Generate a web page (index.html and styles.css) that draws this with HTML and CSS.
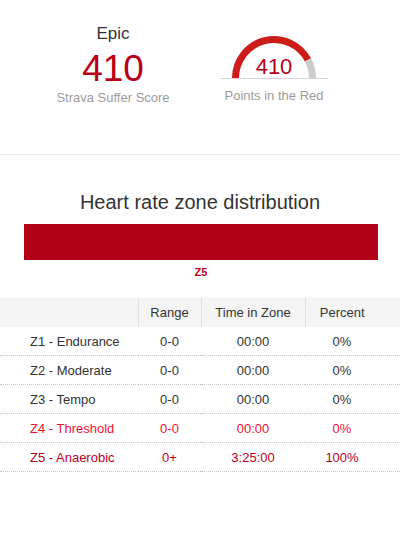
FILE: index.html
```html
<!DOCTYPE html>
<html>
<head>
<meta charset="utf-8">
<link rel="stylesheet" href="styles.css">
</head>
<body>
<section class="summary">
  <div class="score">
    <div class="score-label">Epic</div>
    <div class="score-value">410</div>
    <div class="caption">Strava Suffer Score</div>
  </div>
  <div class="gauge">
    <svg class="gauge-svg" width="108" height="46" viewBox="0 0 108 46">
      <path d="M 15.5 44 A 38.5 38.5 0 0 1 88.0 25.93" fill="none" stroke="#cc1d1a" stroke-width="7"/>
      <path d="M 88.0 25.93 A 38.5 38.5 0 0 1 92.5 44" fill="none" stroke="#cccccc" stroke-width="7"/>
      <line x1="0" y1="44.5" x2="108" y2="44.5" stroke="#d6d6d6" stroke-width="1"/>
      <text x="54" y="40" text-anchor="middle" class="gauge-text">410</text>
    </svg>
    <div class="caption">Points in the Red</div>
  </div>
</section>
<section class="zones">
  <h2 class="zones-title">Heart rate zone distribution</h2>
  <div class="bar"></div>
  <div class="bar-label">Z5</div>
  <table class="zone-table">
    <colgroup>
      <col class="c-name"><col class="c-range"><col class="c-time"><col class="c-pct">
    </colgroup>
    <thead>
      <tr><th></th><th>Range</th><th>Time in Zone</th><th class="pct">Percent</th></tr>
    </thead>
    <tbody>
      <tr><td class="name">Z1 - Endurance</td><td>0-0</td><td>00:00</td><td class="pct">0%</td></tr>
      <tr><td class="name">Z2 - Moderate</td><td>0-0</td><td>00:00</td><td class="pct">0%</td></tr>
      <tr><td class="name">Z3 - Tempo</td><td>0-0</td><td>00:00</td><td class="pct">0%</td></tr>
      <tr class="z4"><td class="name">Z4 - Threshold</td><td>0-0</td><td>00:00</td><td class="pct">0%</td></tr>
      <tr class="z5"><td class="name">Z5 - Anaerobic</td><td>0+</td><td>3:25:00</td><td class="pct">100%</td></tr>
    </tbody>
  </table>
</section>
</body>
</html>
```

FILE: styles.css
```css
html, body {
  margin: 0;
  padding: 0;
  background: #ffffff;
}
body {
  font-family: "Liberation Sans", Arial, sans-serif;
  color: #333333;
  width: 400px;
}
.summary {
  display: flex;
  align-items: flex-start;
  gap: 47px;
  padding-left: 53px;
  height: 154px;
  box-sizing: content-box;
  border-bottom: 1px solid #e8e8e8;
}
.score {
  width: 120px;
  text-align: center;
  padding-top: 24px;
}
.score-label {
  font-size: 17px;
  line-height: 20px;
  color: #333333;
}
.score-value {
  font-size: 37px;
  line-height: 40px;
  margin-top: 5px;
  color: #b90017;
}
.caption {
  font-size: 13px;
  line-height: 16px;
  color: #9c9c9c;
  margin-top: 1px;
}
.gauge {
  width: 108px;
  padding-top: 34px;
  text-align: center;
}
.gauge-svg {
  display: block;
}
.gauge .caption {
  margin-top: 8px;
}
.gauge-text {
  font-family: "Liberation Sans", Arial, sans-serif;
  font-size: 22px;
  fill: #b90017;
}
.zones {
  padding-top: 35px;
}
.zones-title {
  margin: 0;
  font-size: 20px;
  line-height: 24px;
  font-weight: normal;
  text-align: center;
  color: #333333;
}
.bar {
  height: 36px;
  margin: 10px 22px 0 24px;
  background: #b20016;
}
.bar-label {
  margin-top: 5px;
  font-size: 11px;
  line-height: 14px;
  font-weight: bold;
  text-align: center;
  color: #c4001a;
  padding-left: 2px;
}
.zone-table {
  margin-top: 19px;
  width: 400px;
  border-collapse: collapse;
  table-layout: fixed;
  font-size: 13px;
}
.c-name { width: 138px; }
.c-range { width: 63px; }
.c-time { width: 104px; }
.c-pct { width: 95px; }
.zone-table th {
  height: 29px;
  padding: 0;
  background: #f5f5f5;
  font-weight: normal;
  color: #333333;
  text-align: center;
  border-left: 1px solid #e0e0e0;
}
.zone-table th:first-child {
  border-left: none;
}
.zone-table td {
  height: 28px;
  padding: 0;
  text-align: center;
  border-bottom: 1px dotted #c4c4c4;
  color: #333333;
}
.zone-table td.name {
  text-align: left;
  padding-left: 30px;
}
.zone-table .pct {
  padding-right: 21px;
}
.zone-table tr.z4 td {
  color: #ee1133;
}
.zone-table tr.z5 td {
  color: #b8001f;
}
```
